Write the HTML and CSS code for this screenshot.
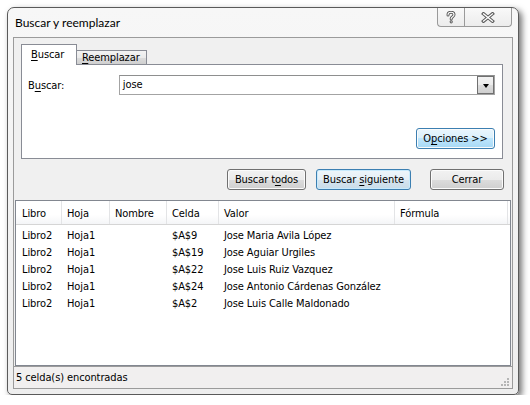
FILE: index.html
```html
<!DOCTYPE html>
<html lang="es">
<head>
<meta charset="utf-8">
<title>Buscar y reemplazar</title>
<link rel="stylesheet" href="styles.css">
</head>
<body>
<div class="window">
  <div class="titlebar">
    <span class="title">Buscar y reemplazar</span>
    <div class="caption">
      <div class="cap help">
        <svg width="10" height="13" viewBox="0 0 10 13">
          <path d="M2 4 C2 2 3.3 1.3 5 1.3 C6.8 1.3 8 2.4 8 3.8 C8 5.6 5.2 5.8 5.2 7.6 V8" fill="none" stroke="#5b5b5b" stroke-width="3" stroke-linecap="round"/>
          <circle cx="5.2" cy="10.8" r="1.6" fill="#5b5b5b"/>
          <path d="M2 4 C2 2 3.3 1.3 5 1.3 C6.8 1.3 8 2.4 8 3.8 C8 5.6 5.2 5.8 5.2 7.6 V8" fill="none" stroke="#fff" stroke-width="1.1" stroke-linecap="round"/>
          <circle cx="5.2" cy="10.8" r="0.6" fill="#fff"/>
        </svg>
      </div>
      <div class="cap close">
        <svg width="14" height="11" viewBox="0 0 14 11">
          <path d="M2.5 1.8 L11.5 9.2 M11.5 1.8 L2.5 9.2" fill="none" stroke="#5b5b5b" stroke-width="3.4" stroke-linecap="square"/>
          <path d="M2.5 1.8 L11.5 9.2 M11.5 1.8 L2.5 9.2" fill="none" stroke="#fff" stroke-width="1.3" stroke-linecap="square"/>
        </svg>
      </div>
    </div>
  </div>
  <div class="client">
    <div class="tabs">
      <div class="tab active"><span><u>B</u>uscar</span></div>
      <div class="tab"><span><u>R</u>eemplazar</span></div>
    </div>
    <div class="panel">
      <div class="find-row">
        <span class="label">B<u>u</u>scar:</span>
        <div class="combo">
          <span class="combo-text">jose</span>
          <div class="drop"><span class="tri"></span></div>
        </div>
      </div>
      <div class="opts-row">
        <div class="btn hot opciones"><span>O<u>p</u>ciones &gt;&gt;</span></div>
      </div>
    </div>
    <div class="actions">
      <div class="btn b-todos"><span>Buscar t<u>o</u>dos</span></div>
      <div class="btn default b-sig"><span>Buscar <u>s</u>iguiente</span></div>
      <div class="btn b-cerrar"><span>Cerrar</span></div>
    </div>
    <div class="list">
      <div class="lv-header">
        <div class="hc">Libro</div>
        <div class="hc">Hoja</div>
        <div class="hc">Nombre</div>
        <div class="hc">Celda</div>
        <div class="hc">Valor</div>
        <div class="hc">Fórmula</div>
        <div class="hc last"></div>
      </div>
      <div class="lv-body">
        <div class="row"><span>Libro2</span><span>Hoja1</span><span></span><span>$A$9</span><span>Jose Maria Avila López</span><span></span></div>
        <div class="row"><span>Libro2</span><span>Hoja1</span><span></span><span>$A$19</span><span>Jose Aguiar Urgiles</span><span></span></div>
        <div class="row"><span>Libro2</span><span>Hoja1</span><span></span><span>$A$22</span><span>Jose Luis Ruiz Vazquez</span><span></span></div>
        <div class="row"><span>Libro2</span><span>Hoja1</span><span></span><span>$A$24</span><span>Jose Antonio Cárdenas González</span><span></span></div>
        <div class="row"><span>Libro2</span><span>Hoja1</span><span></span><span>$A$2</span><span>Jose Luis Calle Maldonado</span><span></span></div>
      </div>
    </div>
    <div class="status">
      <span>5 celda(s) encontradas</span>
      <svg class="grip" width="10" height="10" viewBox="0 0 10 10">
        <g fill="#b5b5b5">
          <rect x="7" y="1" width="2" height="2"/>
          <rect x="4" y="4" width="2" height="2"/>
          <rect x="7" y="4" width="2" height="2"/>
          <rect x="1" y="7" width="2" height="2"/>
          <rect x="4" y="7" width="2" height="2"/>
          <rect x="7" y="7" width="2" height="2"/>
        </g>
      </svg>
    </div>
  </div>
</div>
</body>
</html>
```

FILE: styles.css
```css
* { box-sizing: border-box; }

html, body {
  margin: 0;
  background: #ffffff;
}

body {
  padding: 7px 0 0 7px;
  font-family: "DejaVu Sans Condensed", "Liberation Sans", sans-serif;
  font-size: 11px;
  letter-spacing: -0.1px;
  color: #000;
}

u { text-decoration: underline; text-underline-offset: 2px; }

.window {
  width: 512px;
  height: 388px;
  border: 1px solid #5a5a5a;
  border-radius: 7px 7px 5px 5px;
  background: linear-gradient(#f7f7f7, #eeeeee);
  box-shadow: 3px 3px 6px rgba(0, 0, 0, 0.55);
  padding: 0 5px 5px 5px;
  display: flex;
  flex-direction: column;
}

.titlebar {
  height: 29px;
  display: flex;
  justify-content: space-between;
  align-items: flex-start;
  margin: 0 -5px;
  padding: 0 6px 0 7px;
}

.title {
  line-height: 30px;
  font-family: Lato, "Noto Sans", sans-serif;
  font-size: 12px;
  letter-spacing: 0;
}

.caption {
  display: flex;
  height: 19px;
}

.cap {
  height: 19px;
  display: flex;
  align-items: center;
  justify-content: center;
  border: 1px solid #9a9a9a;
  border-top: none;
  background: linear-gradient(#f9f9f9, #ececec);
}

.help {
  width: 27px;
  border-bottom-left-radius: 4px;
  border-right: none;
}

.close {
  width: 48px;
  border-bottom-right-radius: 4px;
}

.client {
  flex: 1;
  border: 1px solid #9b9b9b;
  background: #f0f0f0;
  display: flex;
  flex-direction: column;
}

.tabs {
  display: flex;
  align-items: flex-end;
  height: 20px;
  margin: 6px 0 0 7px;
}

.tab {
  border: 1px solid #898c95;
  border-bottom: none;
  height: 14px;
  width: 70px;
  padding: 0 0 0 5px;
  line-height: 13px;
  background: linear-gradient(#f3f3f3 0%, #ebebeb 50%, #dddddd 50%, #cfcfcf 100%);
  border-left: none;
}

.tab.active {
  height: 21px;
  width: 56px;
  margin-bottom: -1px;
  padding: 0 0 0 9px;
  line-height: 20px;
  background: #ffffff;
  border-left: 1px solid #898c95;
  position: relative;
  z-index: 1;
}

.panel {
  width: 482px;
  height: 95px;
  margin-left: 7px;
  border: 1px solid #898c95;
  background: #ffffff;
  padding: 10px 7px 8px 6px;
  display: flex;
  flex-direction: column;
}

.find-row {
  display: flex;
  align-items: center;
}

.label {
  width: 91px;
}

.combo {
  width: 377px;
  height: 20px;
  border: 1px solid #a3a3a3;
  border-top-color: #8e8f8f;
  display: flex;
  align-items: center;
  justify-content: space-between;
  padding: 0 0 0 3px;
  background: #fff;
}

.combo-text { line-height: 18px; }

.drop {
  width: 17px;
  height: 18px;
  border: 1px solid #707070;
  background: linear-gradient(#f2f2f2 0%, #ebebeb 50%, #dddddd 50%, #cfcfcf 100%);
  display: flex;
  align-items: center;
  justify-content: center;
}

.tri {
  width: 0;
  height: 0;
  border-left: 3.5px solid transparent;
  border-right: 3.5px solid transparent;
  border-top: 4px solid #000;
  margin-top: 1px;
}

.opts-row {
  display: flex;
  justify-content: flex-end;
  margin-top: 33px;
}

.btn {
  height: 21px;
  border: 1px solid #707070;
  border-radius: 3px;
  background: linear-gradient(#f2f2f2 0%, #ebebeb 50%, #dddddd 50%, #cfcfcf 100%);
  box-shadow: inset 0 0 0 1px #fbfbfb;
  display: flex;
  align-items: center;
  justify-content: center;
  line-height: 19px;
}

.btn.hot {
  border-color: #3c7fb1;
  background: linear-gradient(#eaf6fd 0%, #d9f0fc 50%, #bee6fd 50%, #a7d9f5 100%);
}

.btn.default {
  border-color: #3c7fb1;
  background: linear-gradient(#eef6fb 0%, #e5eff6 50%, #d6e5ef 50%, #c9dce9 100%);
  box-shadow: inset 0 0 0 1px #c8eafc;
}

.opciones { width: 79px; }

.actions {
  display: flex;
  margin: 10px 0 0 213px;
  height: 21px;
}

.b-todos { width: 79px; }
.b-sig { width: 95px; margin-left: 10px; }
.b-cerrar { width: 74px; margin-left: 19px; }

.list {
  margin: 10px 1px 0 1px;
  height: 166px;
  border: 1px solid #828790;
  background: #ffffff;
  display: flex;
  flex-direction: column;
}

.lv-header,
.row {
  display: grid;
  grid-template-columns: 45px 48px 57px 52px 176px 113px 1fr;
  padding-left: 1px;
}

.lv-header {
  height: 24px;
  background: linear-gradient(#ffffff 0%, #ffffff 60%, #f4f5f7 100%);
  border-bottom: 1px solid #d5d5d5;
}

.hc {
  padding: 2px 0 0 5px;
  line-height: 21px;
  border-right: 1px solid #e3e4e6;
  white-space: nowrap;
}

.hc.last {
  border-right: none;
}

.lv-body {
  padding-top: 2px;
}

.row {
  height: 17px;
}

.row span {
  padding-left: 5px;
  line-height: 17px;
  white-space: nowrap;
}

.status {
  flex: 1;
  display: flex;
  align-items: center;
  justify-content: space-between;
  padding: 0 2px 0 2px;
  background: #f1efef;
  border-top: 1px solid #9b9b9b;
}

.grip {
  align-self: flex-end;
  margin-bottom: 1px;
}
```
